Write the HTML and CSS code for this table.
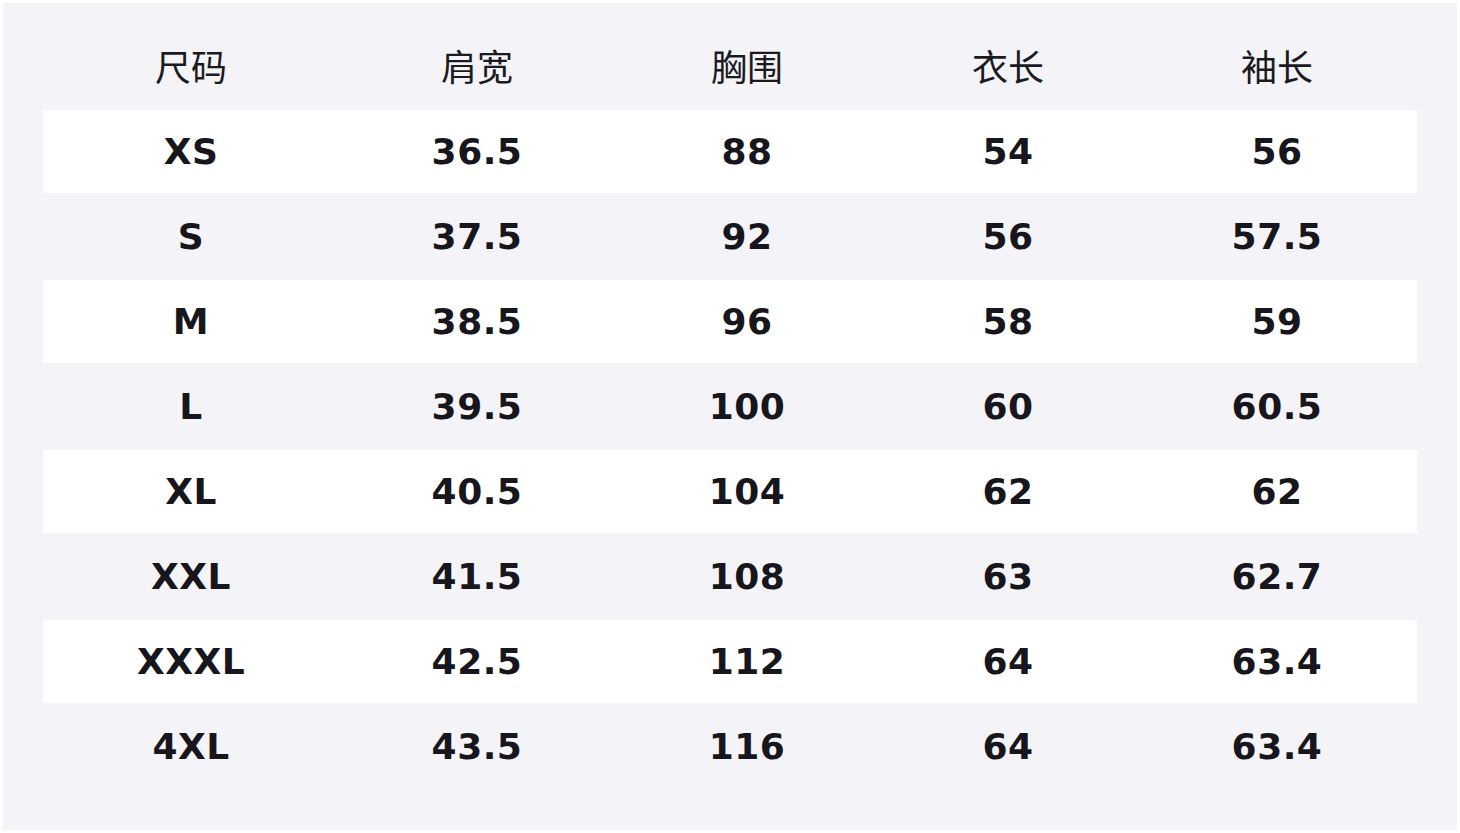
FILE: index.html
```html
<!DOCTYPE html>
<html lang="zh">
<head>
<meta charset="utf-8">
<title>尺码表</title>
<link rel="stylesheet" href="styles.css">
</head>
<body>
<div class="panel">
  <div class="table">
    <div class="row head">
      <div class="cell">尺码</div><div class="cell">肩宽</div><div class="cell">胸围</div><div class="cell">衣长</div><div class="cell">袖长</div>
    </div>
    <div class="row odd"><div class="cell">XS</div><div class="cell">36.5</div><div class="cell">88</div><div class="cell">54</div><div class="cell">56</div></div>
    <div class="row even"><div class="cell">S</div><div class="cell">37.5</div><div class="cell">92</div><div class="cell">56</div><div class="cell">57.5</div></div>
    <div class="row odd"><div class="cell">M</div><div class="cell">38.5</div><div class="cell">96</div><div class="cell">58</div><div class="cell">59</div></div>
    <div class="row even"><div class="cell">L</div><div class="cell">39.5</div><div class="cell">100</div><div class="cell">60</div><div class="cell">60.5</div></div>
    <div class="row odd"><div class="cell">XL</div><div class="cell">40.5</div><div class="cell">104</div><div class="cell">62</div><div class="cell">62</div></div>
    <div class="row even"><div class="cell">XXL</div><div class="cell">41.5</div><div class="cell">108</div><div class="cell">63</div><div class="cell">62.7</div></div>
    <div class="row odd"><div class="cell">XXXL</div><div class="cell">42.5</div><div class="cell">112</div><div class="cell">64</div><div class="cell">63.4</div></div>
    <div class="row even"><div class="cell">4XL</div><div class="cell">43.5</div><div class="cell">116</div><div class="cell">64</div><div class="cell">63.4</div></div>
  </div>
</div>
</body>
</html>
```

FILE: styles.css
```css
html, body {
  margin: 0;
  padding: 0;
  background: #ffffff;
}
body {
  padding: 3px;
  width: 1460px;
  height: 833px;
  box-sizing: border-box;
}
.panel {
  background: #f3f3f8;
  padding: 40px;
  height: 827px;
  box-sizing: border-box;
  width: 1454px;
}
.table {
  display: flex;
  flex-direction: column;
}
.row {
  display: grid;
  grid-template-columns: 296px 276px 264px 258px 280px;
  align-items: center;
}
.cell {
  text-align: center;
}
.head {
  height: 67px;
  padding-bottom: 24px;
  box-sizing: border-box;
  font-family: "Noto Sans CJK SC", "Noto Sans", sans-serif;
  font-size: 36px;
  font-weight: 400;
  color: #1b1b1f;
  line-height: 1;
}
.odd, .even {
  font-family: "DejaVu Sans", sans-serif;
  font-weight: 700;
  font-size: 36px;
  letter-spacing: 0.5px;
  color: #16161c;
  line-height: 1;
}
.odd {
  background: #ffffff;
  height: 83px;
}
.even {
  height: 87px;
}
```
